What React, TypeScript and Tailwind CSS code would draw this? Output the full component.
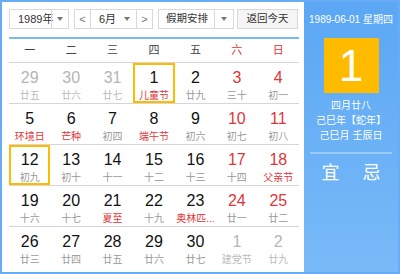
import { useState } from 'react';

type Day = {
	d: number;
	l: string;
	other?: boolean;
	red?: boolean;
	fest?: boolean;
};

const weeks: Day[][] = [
	[
		{ d: 29, l: '廿五', other: true },
		{ d: 30, l: '廿六', other: true },
		{ d: 31, l: '廿七', other: true },
		{ d: 1, l: '儿童节', fest: true },
		{ d: 2, l: '廿九' },
		{ d: 3, l: '三十', red: true },
		{ d: 4, l: '初一', red: true },
	],
	[
		{ d: 5, l: '环境日', fest: true },
		{ d: 6, l: '芒种', fest: true },
		{ d: 7, l: '初四' },
		{ d: 8, l: '端午节', fest: true },
		{ d: 9, l: '初六' },
		{ d: 10, l: '初七', red: true },
		{ d: 11, l: '初八', red: true },
	],
	[
		{ d: 12, l: '初九' },
		{ d: 13, l: '初十' },
		{ d: 14, l: '十一' },
		{ d: 15, l: '十二' },
		{ d: 16, l: '十三' },
		{ d: 17, l: '十四', red: true },
		{ d: 18, l: '父亲节', red: true, fest: true },
	],
	[
		{ d: 19, l: '十六' },
		{ d: 20, l: '十七' },
		{ d: 21, l: '夏至', fest: true },
		{ d: 22, l: '十九' },
		{ d: 23, l: '奥林匹...', fest: true },
		{ d: 24, l: '廿一', red: true },
		{ d: 25, l: '廿二', red: true },
	],
	[
		{ d: 26, l: '廿三' },
		{ d: 27, l: '廿四' },
		{ d: 28, l: '廿五' },
		{ d: 29, l: '廿六' },
		{ d: 30, l: '廿七' },
		{ d: 1, l: '建党节', other: true },
		{ d: 2, l: '廿九', other: true },
	],
];

const weekdays = ['一', '二', '三', '四', '五', '六', '日'];

const Caret = () => (
	<span className="w-0 h-0 border-l-[3px] border-r-[3px] border-t-[4px] border-l-transparent border-r-transparent border-t-[#777]" />
);

const App = () => {
	const [selected, setSelected] = useState<string>('0-3');
	const today = '2-0';

	return (
		<div
			className="w-[400px] h-[274px] border-2 border-[#67acf4] flex bg-white text-[#222] overflow-hidden"
			style={{ fontFamily: '"Liberation Sans", "Noto Sans CJK SC", sans-serif' }}
		>
			<div className="w-[302px] pl-[7px] pr-[5px] pt-[7px]">
				<div className="flex items-center h-[20px] text-[11px] whitespace-nowrap">
					<div className="flex items-center w-[60px] h-[20px] border border-[#d9d9d9]">
						<span className="w-[41px] pl-[8px] text-[#333]">1989年</span>
						<span className="flex-1 h-full border-l border-[#d9d9d9] flex items-center justify-center">
							<Caret />
						</span>
					</div>
					<div className="flex items-center w-[79px] h-[20px] border border-[#d9d9d9] ml-[5px]">
						<span className="w-[16px] h-full flex items-center justify-center text-[#777] border-r border-[#d9d9d9]">&lt;</span>
						<span className="flex-1 flex items-center justify-between pl-[8px] pr-[6px] text-[#333]">
							6月
							<Caret />
						</span>
						<span className="w-[16px] h-full flex items-center justify-center text-[#777] border-l border-[#d9d9d9]">&gt;</span>
					</div>
					<div className="flex items-center w-[76px] h-[20px] border border-[#d9d9d9] ml-[5px]">
						<span className="w-[55px] pl-[7px] text-[#333] text-[10.5px]">假期安排</span>
						<span className="flex-1 h-full border-l border-[#d9d9d9] flex items-center justify-center">
							<Caret />
						</span>
					</div>
					<button className="ml-[3px] w-[61px] h-[20px] border border-[#d9d9d9] bg-[#f5f5f5] text-[#333] text-[10.5px]">
						返回今天
					</button>
				</div>
				<div className="mt-[8px] border-t-2 border-[#7ab8f2]" />
				<div className="grid grid-cols-7 h-[24px] items-center border-b border-[#d6d6d6] text-[11px]">
					{weekdays.map((w, i) => (
						<span key={w} className={`text-center ${i > 4 ? 'text-[#e0363b]' : 'text-[#444]'}`}>
							{w}
						</span>
					))}
				</div>
				{weeks.map((week, wi) => (
					<div
						key={wi}
						className={`grid grid-cols-7 h-[41px] ${wi < 4 ? 'border-b border-[#d6d6d6]' : ''}`}
					>
						{week.map((day, di) => {
							const key = `${wi}-${di}`;
							const boxed = key === selected || key === today;
							const numColor = day.other
								? 'text-[#b5b5b5]'
								: day.red
									? 'text-[#e0363b]'
									: 'text-[#111]';
							const lunarColor = day.other
								? 'text-[#bbbbbb]'
								: day.fest
									? 'text-[#e0363b]'
									: 'text-[#999]';
							return (
								<button
									key={key}
									onClick={() => setSelected(key)}
									className={`flex flex-col items-center pt-[3px] h-[40px] ${boxed ? 'border-2 border-[#ffbb00]' : 'border-2 border-transparent'}`}
								>
									<span className={`text-[16px] leading-[20px] ${numColor}`}>{day.d}</span>
									<span className={`text-[10px] leading-[14px] mt-[1px] whitespace-nowrap ${lunarColor}`}>
										{day.l}
									</span>
								</button>
							);
						})}
					</div>
				))}
			</div>
			<div className="flex-1 bg-gradient-to-b from-[#5ba7f4] to-[#79baf8] flex flex-col items-center text-white">
				<div className="mt-[10px] text-[10px] leading-[16px] whitespace-nowrap">1989-06-01 星期四</div>
				<div className="mt-[10px] w-[55px] h-[55px] bg-[#ffbb00] flex items-center justify-center text-[44px] leading-none">
					1
				</div>
				<div className="mt-[5px] text-[10px] leading-[15px] text-center whitespace-nowrap">
					<div>四月廿八</div>
					<div>己巳年【蛇年】</div>
					<div>己巳月 壬辰日</div>
				</div>
				<div className="mt-[9px] w-[82px] border-t-2 border-[#9ccbf8]" />
				<div className="mt-[8px] flex gap-[23px] text-[18px] leading-[22px]">
					<span>宜</span>
					<span>忌</span>
				</div>
			</div>
		</div>
	);
};

export default App;
